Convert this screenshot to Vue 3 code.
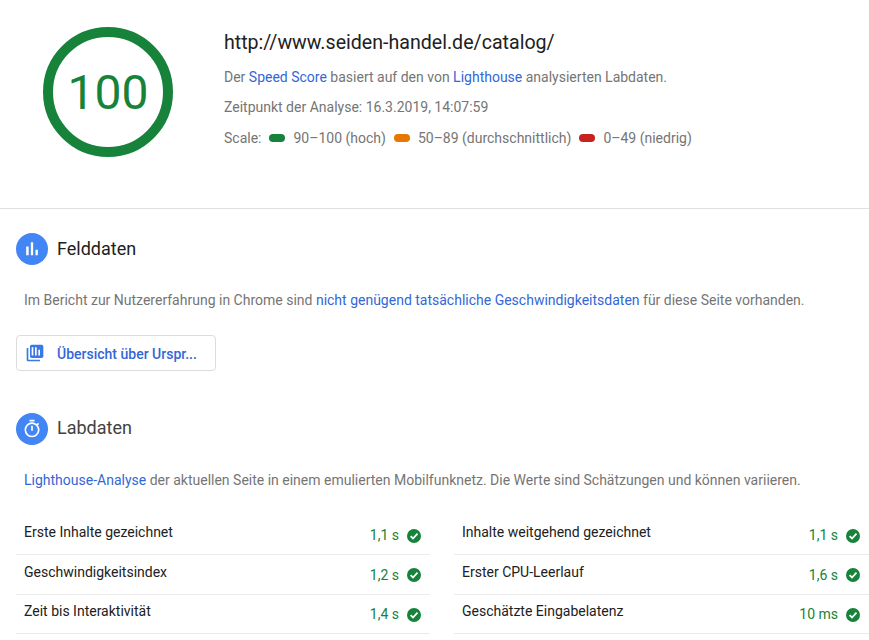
<script setup>
const scale = [
  { cls: 'good', text: '90–100 (hoch)' },
  { cls: 'mid', text: '50–89 (durchschnittlich)' },
  { cls: 'bad', text: '0–49 (niedrig)' }
]
const metrics = [
  { label: 'Erste Inhalte gezeichnet', value: '1,1 s' },
  { label: 'Inhalte weitgehend gezeichnet', value: '1,1 s' },
  { label: 'Geschwindigkeitsindex', value: '1,2 s' },
  { label: 'Erster CPU-Leerlauf', value: '1,6 s' },
  { label: 'Zeit bis Interaktivität', value: '1,4 s' },
  { label: 'Geschätzte Eingabelatenz', value: '10 ms' }
]
</script>

<template>
  <div class="page">
    <header class="summary">
      <div class="gauge"><span>100</span></div>
      <div class="info">
        <h1 class="url">http://www.seiden-handel.de/catalog/</h1>
        <p class="line">Der <a>Speed Score</a> basiert auf den von <a>Lighthouse</a> analysierten Labdaten.</p>
        <p class="line">Zeitpunkt der Analyse: 16.3.2019, 14:07:59</p>
        <div class="line scale">
          <span class="scale-label">Scale:</span>
          <span v-for="s in scale" :key="s.cls" class="scale-item">
            <i class="pill" :class="s.cls"></i>{{ s.text }}
          </span>
        </div>
      </div>
    </header>

    <section class="field">
      <div class="heading">
        <span class="badge">
          <svg viewBox="0 0 24 24" width="20" height="20"><path fill="#fff" d="M5 9h3v10.500H5zM10.600 4h2.800v15.500h-2.800zm5.600 9H19v6.500h-2.800z"/></svg>
        </span>
        <h2>Felddaten</h2>
      </div>
      <p class="text">Im Bericht zur Nutzererfahrung in Chrome sind <a>nicht genügend tatsächliche Geschwindigkeitsdaten</a> für diese Seite vorhanden.</p>
      <button class="origin">
        <svg viewBox="0 0 24 24" width="20" height="20"><path fill="#3b78e7" d="M4 6H2v14c0 1.100.9 2 2 2h14v-2H4V6zm16-4H8c-1.100 0-2 .9-2 2v12c0 1.100.9 2 2 2h12c1.100 0 2-.9 2-2V4c0-1.100-.9-2-2-2zm-10 13H8V5h2v10zm4 0h-2V5h2v10zm4 0h-2V8h2v7z"/></svg>
        <span>Übersicht über Urspr...</span>
      </button>
    </section>

    <section class="lab">
      <div class="heading">
        <span class="badge">
          <svg viewBox="0 0 24 24" width="20" height="20"><path fill="#fff" d="M15 1H9v2h6V1zm-4 13h2V8h-2v6zm8.030-6.610 1.420-1.420c-.43-.51-.9-.99-1.410-1.410l-1.420 1.420A8.960 8.960 0 0 0 12 4a9 9 0 0 0-9 9 9 9 0 0 0 9 9 9 9 0 0 0 7.030-14.610zM12 20a7 7 0 1 1 0-14 7 7 0 0 1 0 14z"/></svg>
        </span>
        <h2>Labdaten</h2>
      </div>
      <p class="text"><a>Lighthouse-Analyse</a> der aktuellen Seite in einem emulierten Mobilfunknetz. Die Werte sind Schätzungen und können variieren.</p>
      <div class="metrics">
        <div v-for="m in metrics" :key="m.label" class="metric">
          <span class="metric-label">{{ m.label }}</span>
          <span class="metric-value">{{ m.value }}</span>
          <svg class="check" viewBox="0 0 14 14" width="14" height="14"><circle cx="7" cy="7" r="7" fill="#178239"/><path d="M3.600 7.200 6 9.500l4.500-4.800" fill="none" stroke="#fff" stroke-width="1.800"/></svg>
        </div>
      </div>
    </section>
  </div>
</template>

<style>
html, body { margin: 0; background: #fff; overflow: hidden; }
</style>

<style scoped>
.page {
  width: 869px;
  height: 640px;
  overflow: hidden;
  font-family: Roboto, "Liberation Sans", sans-serif;
  font-size: 14px;
  color: #757575;
}
a { color: #3367d6; }
.summary {
  display: flex;
  height: 181px;
  border-bottom: 1px solid #e0e0e0;
  padding: 27px 0 0 43px;
}
.gauge {
  width: 130px;
  height: 130px;
  box-sizing: border-box;
  border: 10px solid #178239;
  border-radius: 50%;
  display: flex;
  align-items: center;
  justify-content: center;
  color: #178239;
  font-size: 48px;
  flex: none;
}
.info { margin-left: 51px; }
.url {
  margin: 3px 0 0;
  font-size: 19.6px;
  font-weight: 400;
  line-height: 26px;
  color: #212121;
}
.line { margin: 0; line-height: 20px; height: 20px; }
.url + .line { margin-top: 11px; }
.line + .line { margin-top: 10px; }
.line + .line + .line { margin-top: 11px; }
.scale { display: flex; }
.scale-label { margin-right: 8px; }
.scale-item { display: flex; align-items: center; margin-right: 8px; }
.pill {
  width: 16px;
  height: 8px;
  border-radius: 4px;
  margin-right: 8px;
}
.pill.good { background: #178239; }
.pill.mid { background: #e67700; }
.pill.bad { background: #c7221f; }
.field { padding: 24px 0 0 16px; }
.heading { display: flex; align-items: center; height: 32px; }
.badge {
  width: 32px;
  height: 32px;
  border-radius: 50%;
  background: #4285f4;
  display: flex;
  align-items: center;
  justify-content: center;
  flex: none;
}
h2 {
  margin: 0 0 2px 9px;
  font-size: 18px;
  font-weight: 400;
  color: #212121;
}
.lab h2 { color: #424242; margin-bottom: 4px; }
.text {
  margin: 25px 0 0 8px;
  line-height: 20px;
}
.origin {
  display: flex;
  align-items: center;
  width: 200px;
  height: 36px;
  margin-top: 25px;
  padding: 0 0 0 8px;
  box-sizing: border-box;
  background: #fff;
  border: 1px solid #dadce0;
  border-radius: 4px;
  font: 500 14px Roboto, sans-serif;
  color: #3367d6;
}
.origin span { margin-left: 12px; padding-top: 2px; }
.lab { padding: 42px 0 0 16px; }
.metrics {
  display: grid;
  grid-template-columns: 414px 415px;
  column-gap: 24px;
  margin-top: 25.9px;
}
.metric {
  display: flex;
  align-items: center;
  height: 38.5px;
  padding: 0 9px 0 8px;
  border-bottom: 1px solid #ebebeb;
}
.metric-label { flex: 1; color: #212121; position: relative; top: -3px; }
.metric-value { color: #178239; margin-right: 8px; }
.check { flex: none; position: relative; top: 0.4px; }
</style>
